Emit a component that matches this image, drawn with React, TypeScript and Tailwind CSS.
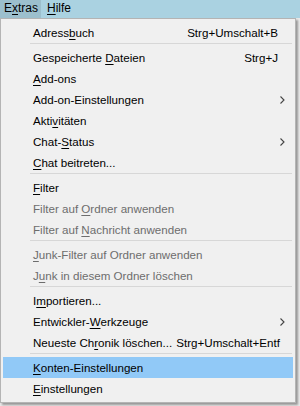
import React from 'react';

type Item =
  | { sep: true }
  | { label: React.ReactNode; shortcut?: string; sub?: boolean; disabled?: boolean; active?: boolean };

// underline the access key letter
const k = (before: string, key: string, after: string) => (
  <>
    {before}
    <u className="underline-offset-[2px]">{key}</u>
    {after}
  </>
);

const items: Item[] = [
  { label: k('Adress', 'b', 'uch'), shortcut: 'Strg+Umschalt+B' },
  { sep: true },
  { label: k('Gespeicherte ', 'D', 'ateien'), shortcut: 'Strg+J' },
  { label: k('', 'A', 'dd-ons') },
  { label: 'Add-on-Einstellungen', sub: true },
  { label: k('Akti', 'v', 'itäten') },
  { label: k('Chat-', 'S', 'tatus'), sub: true },
  { label: k('', 'C', 'hat beitreten...') },
  { sep: true },
  { label: k('', 'F', 'ilter') },
  { label: k('Filter auf ', 'O', 'rdner anwenden'), disabled: true },
  { label: k('Filter auf ', 'N', 'achricht anwenden'), disabled: true },
  { sep: true },
  { label: k('', 'J', 'unk-Filter auf Ordner anwenden'), disabled: true },
  { label: k('J', 'u', 'nk in diesem Ordner löschen'), disabled: true },
  { sep: true },
  { label: k('I', 'm', 'portieren...') },
  { label: k('Entwickler-', 'W', 'erkzeuge'), sub: true },
  { label: k('Neueste Ch', 'r', 'onik löschen...'), shortcut: 'Strg+Umschalt+Entf' },
  { sep: true },
  { label: k('', 'K', 'onten-Einstellungen'), active: true },
  { label: k('', 'E', 'instellungen') },
];

function Chevron() {
  return (
    <svg width="5" height="8" viewBox="0 0 5 8" className="absolute right-[8px] top-[7px]">
      <path d="M0.5 0.5 L4 4 L0.5 7.5" fill="none" stroke="#444" strokeWidth="1.1" />
    </svg>
  );
}

export default function App() {
  return (
    <div
      className="w-[300px] h-[406px] overflow-hidden bg-[#e9e9e9] text-[11.6px]"
      style={{ fontFamily: '"Liberation Sans", Arial, sans-serif' }}
    >
      {/* menu bar */}
      <div className="h-[18px] bg-[#aad2e1] flex text-black leading-[17px] text-[12px]">
        <div className="w-[41px] bg-[#9cbfcd] pl-[4px]">
          E<u className="underline-offset-[2px]">x</u>tras
        </div>
        <div className="pl-[6px]">
          <u className="underline-offset-[2px]">H</u>ilfe
        </div>
      </div>

      {/* dropdown */}
      <div className="w-[296px] bg-[#f0f0f0] border border-[#b4b4b4] px-[2px] pt-[3px] pb-[3px] shadow-[2px_2px_2px_rgba(0,0,0,0.35)]">
        {items.map((it, i) =>
          'sep' in it ? (
            <div key={i} className="h-[4px]">
              <div className="h-px ml-[27px] mr-[1px] bg-[#d7d7d7]" />
            </div>
          ) : (
            <div
              key={i}
              className={
                'relative h-[21px] leading-[21px] pl-[30px] pr-[15px] flex whitespace-nowrap ' +
                (it.active ? 'bg-[#91c9f7] ' : '') +
                (it.disabled ? 'text-[#6d6d6d]' : 'text-black')
              }
            >
              <span className="flex-1">{it.label}</span>
              {it.shortcut && <span className="pl-[4px]">{it.shortcut}</span>}
              {it.sub && <Chevron />}
            </div>
          )
        )}
      </div>
    </div>
  );
}
